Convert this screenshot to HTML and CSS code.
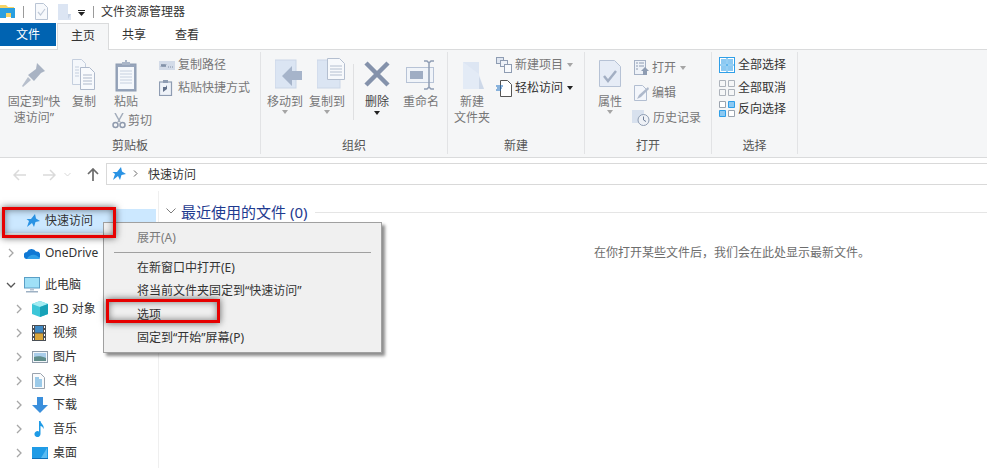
FILE: index.html
```html
<!DOCTYPE html>
<html lang="zh-CN">
<head>
<meta charset="utf-8">
<title>文件资源管理器</title>
<link rel="stylesheet" href="styles.css">
</head>
<body>
<div class="window">
  <header class="titlebar">
    <svg class="qa-folder" width="15" height="15" viewBox="0 0 15 15"><path d="M0 1h6l2 2h6v10H0z" fill="#f6d365"/><path d="M0 4h15v10H11V9H6v5H0z" fill="#2a9fe0"/></svg>
    <span class="qa-sep"></span>
    <svg class="qa-doc" width="13" height="17" viewBox="0 0 13 17"><path d="M.5.5h8l4 4v12H.5z" fill="#f7f9fc" stroke="#b9c4d4"/><path d="M3 9l2.500 3L10 6" fill="none" stroke="#c0cad8" stroke-width="1.200"/></svg>
    <svg class="qa-doc2" width="13" height="16" viewBox="0 0 13 16"><path d="M0 0h10v10h3v6H0z" fill="#dce5f3"/><path d="M10 10h3l-3 5z" fill="#c6d2e4"/></svg>
    <svg class="qa-drop" width="7" height="6" viewBox="0 0 7 6"><path d="M0 0h7v1H0zM0 2h7L3.500 6z" fill="#222"/></svg>
    <span class="qa-sep second"></span>
    <span class="title-text">文件资源管理器</span>
  </header>

  <nav class="tabs">
    <span class="tab file">文件</span>
    <span class="tab active">主页</span>
    <span class="tab share">共享</span>
    <span class="tab view">查看</span>
  </nav>

  <section class="ribbon">
    <div class="group g-clip">
      <div class="group-body">
        <div class="big w-pin">
          <svg class="bigicon" width="36" height="36" viewBox="0 0 36 36"><path d="M21 5l8 8-4 2-7 8-6-6 8-6z" fill="#a9b3c3"/><path d="M12 19l3 3-8 7-1-1z" fill="#b7bfcc"/></svg>
          <span class="lbl">固定到“快<br>速访问”</span>
        </div>
        <div class="big w-copy">
          <svg class="bigicon" width="26" height="36" viewBox="0 0 26 36"><path d="M1.500 1.500h9l4 4v21h-13z" fill="#f4f7fb" stroke="#c5cfde"/><path d="M9.500 9.500h9l5 5v17h-14z" fill="#f8fafd" stroke="#aeb9cb"/><path d="M12 17h9M12 20h9M12 23h9M12 26h9" stroke="#aeb9cb"/><path d="M4 9h4M4 12h4M4 15h4M4 18h4" stroke="#c5cfde"/></svg>
          <span class="lbl">复制</span>
        </div>
        <div class="paste-col">
          <div class="big w-paste">
            <svg class="bigicon" width="22" height="32" viewBox="0 0 22 32"><rect x="1" y="4" width="20" height="27" fill="#97a5bb" stroke="#8e9cb2"/><rect x="3" y="7" width="16" height="22" fill="#f5f8fc"/><path d="M5 11h12M5 14h12M5 17h12M5 20h12M5 23h12" stroke="#c6d0df"/><path d="M7 5V2h3V0h2v2h3v3z" fill="#aab6c8"/></svg>
            <span class="lbl">粘贴</span>
          </div>
          <div class="small cut">
            <svg width="14" height="16" viewBox="0 0 14 16"><path d="M3 0l5 9M11 0L6 9" stroke="#a2acbb" stroke-width="1.500" fill="none"/><circle cx="3.500" cy="12" r="2.500" fill="none" stroke="#8f9aad" stroke-width="1.500"/><circle cx="10.500" cy="12" r="2.500" fill="none" stroke="#8f9aad" stroke-width="1.500"/></svg>
            <span>剪切</span>
          </div>
        </div>
        <div class="small-col clip-small">
          <div class="small">
            <svg width="16" height="9" viewBox="0 0 16 9"><rect width="16" height="9" fill="#d3dbe8"/><path d="M2 6l1-3 1 3 1-3 1 3 1-3M9 6h1M11 6h1M13 6h1" stroke="#6f7f98" fill="none" stroke-width=".8"/></svg>
            <span>复制路径</span>
          </div>
          <div class="small shortcut">
            <svg width="14" height="16" viewBox="0 0 14 16"><rect x=".5" y="2" width="12" height="13.500" fill="#eef2f8" stroke="#8e9cb2" stroke-width="1.200"/><rect x="4" y="0" width="5" height="3" fill="#8e9cb2"/><path d="M4 12V7h4M8 5v4l-4 3z" fill="#62718a"/></svg>
            <span>粘贴快捷方式</span>
          </div>
        </div>
      </div>
      <div class="group-label">剪贴板</div>
    </div>

    <div class="group g-org">
      <div class="group-body">
        <div class="big w-move">
          <svg class="bigicon shift" width="28" height="36" viewBox="0 0 28 36"><rect x="0" y="2" width="21" height="28" fill="#dbe5f3" stroke="#cbd6e7"/><path d="M27 13v9H17v6L7 18l10-10v5z" fill="#a6b4ca"/></svg>
          <span class="lbl">移动到</span>
          <i class="caret"></i>
        </div>
        <div class="big w-copyto">
          <svg class="bigicon shift" width="28" height="36" viewBox="0 0 28 36"><rect x="0" y="2" width="23" height="28" fill="#dbe5f3" stroke="#cbd6e7"/><path d="M10.500 .5h12l5 5v16h-17z" fill="#f7f9fc" stroke="#b4bfd0"/><path d="M13 8h12M13 11h12M13 14h12M13 17h12" stroke="#b4bfd0"/></svg>
          <span class="lbl">复制到</span>
          <i class="caret"></i>
        </div>
        <span class="vsep"></span>
        <div class="big w-del">
          <svg class="bigicon" width="28" height="36" viewBox="0 0 28 36"><path d="M3 5l22 22M25 5L3 27" stroke="#8492ab" stroke-width="4.500"/></svg>
          <span class="lbl dark">删除</span>
          <i class="caret dark"></i>
        </div>
        <div class="big w-ren">
          <svg class="bigicon" width="30" height="36" viewBox="0 0 30 36"><rect x=".5" y="9.500" width="27" height="15" fill="#f0f4f9" stroke="#b7c3d6"/><rect x="4" y="13" width="13" height="8" fill="#9fadc3"/><path d="M18 3h3l2 2 2-2h3M18 31h3l2-2 2 2h3M23 5v24" stroke="#8f9db4" stroke-width="1.500" fill="none"/></svg>
          <span class="lbl">重命名</span>
        </div>
      </div>
      <div class="group-label">组织</div>
    </div>

    <div class="group g-new">
      <div class="group-body">
        <div class="big w-newf">
          <svg class="bigicon" width="24" height="36" viewBox="0 0 24 36"><path d="M3 4h16v27H3z" fill="#dde6f3"/><path d="M19 16l5 15H9L3 31V4z" fill="#e6edf7" opacity=".7"/><path d="M19 18l5 13h-5z" fill="#cdd8e8"/></svg>
          <span class="lbl">新建<br>文件夹</span>
        </div>
        <div class="small-col new-small">
          <div class="small">
            <svg width="16" height="16" viewBox="0 0 16 16"><rect x=".5" y=".5" width="7" height="6" fill="#dfe6f1" stroke="#8e9cb2"/><rect x="4.500" y="3.500" width="7" height="6" fill="#eef2f8" stroke="#8e9cb2"/><rect x="8.500" y="7.500" width="7" height="8" fill="#f7f9fc" stroke="#8e9cb2"/></svg>
            <span>新建项目</span><i class="caret inline"></i>
          </div>
          <div class="small dark">
            <svg width="16" height="17" viewBox="0 0 16 17"><path d="M4.500 .5h7l4 4v12h-11z" fill="#fff" stroke="#555"/><path d="M0 6h7M1 8h5M0 10h5" stroke="#1c6fc2" stroke-width="1.200"/></svg>
            <span>轻松访问</span><i class="caret inline dark"></i>
          </div>
        </div>
      </div>
      <div class="group-label">新建</div>
    </div>

    <div class="group g-open">
      <div class="group-body">
        <div class="big w-prop">
          <svg class="bigicon" width="22" height="36" viewBox="0 0 22 36"><path d="M.5 2.500h15l6 6v20H.5z" fill="#e6ecf6" stroke="#b6c2d5"/><path d="M5 18l4 5 8-10" fill="none" stroke="#a3afc3" stroke-width="2.500"/></svg>
          <span class="lbl">属性</span>
          <i class="caret"></i>
        </div>
        <div class="small-col open-small">
          <div class="small">
            <svg width="15" height="16" viewBox="0 0 15 16"><rect x=".5" y=".5" width="11" height="14" fill="#eef2f8" stroke="#a5b1c5"/><path d="M2 3h2M5 3h5M2 6h2M5 6h5M2 9h2" stroke="#8e9cb2"/><path d="M11 7l4 4h-2v4h-4v-4H7z" fill="#8e9cb2"/></svg>
            <span>打开</span><i class="caret inline"></i>
          </div>
          <div class="small">
            <svg width="15" height="16" viewBox="0 0 15 16"><path d="M.5.500h8l4 4v11H.5z" fill="#f3f6fb" stroke="#b2bed1"/><path d="M3 14l2-4 9-8 1 2-8 8z" fill="#aeb9cb"/></svg>
            <span>编辑</span>
          </div>
          <div class="small">
            <svg class="hist" width="18" height="16" viewBox="0 0 18 16"><rect x="0" y="0" width="12" height="13" fill="#d8e1ee"/><circle cx="11.500" cy="10" r="5.500" fill="#eef1f6" stroke="#8e9cb2"/><path d="M11.500 6.500V10l2.500 1.500" stroke="#6f7f98" fill="none"/></svg>
            <span>历史记录</span>
          </div>
        </div>
      </div>
      <div class="group-label">打开</div>
    </div>

    <div class="group g-sel">
      <div class="group-body">
        <div class="small-col sel-small">
          <div class="small dark">
            <svg width="16" height="16" viewBox="0 0 16 16"><rect x=".5" y=".5" width="15" height="15" fill="#fff" stroke="#2f9fe8"/><path d="M8 0v16M0 8h16" stroke="#2f9fe8"/><path d="M2 2h5v5H2zM9 2h5v5H9zM2 9h5v5H2zM9 9h5v5H9z" fill="#8cc9f2"/></svg>
            <span>全部选择</span>
          </div>
          <div class="small dark">
            <svg width="16" height="16" viewBox="0 0 16 16"><path d="M.5.500h6v6h-6zM9.500.500h6v6h-6zM.5 9.500h6v6h-6zM9.500 9.500h6v6h-6z" fill="none" stroke="#adb3bb"/></svg>
            <span>全部取消</span>
          </div>
          <div class="small dark">
            <svg width="16" height="16" viewBox="0 0 16 16"><path d="M.5.500h6v6h-6zM9.500 9.500h6v6h-6z" fill="#fff" stroke="#9aa3ae"/><path d="M9.500.500h6v6h-6zM.5 9.500h6v6h-6z" fill="#8cc9f2" stroke="#2f9fe8"/></svg>
            <span>反向选择</span>
          </div>
        </div>
      </div>
      <div class="group-label">选择</div>
    </div>
  </section>

  <div class="addressrow">
    <svg class="nav-back" width="13" height="12" viewBox="0 0 13 12"><path d="M6 1L1 6l5 5M1 6h12" stroke="#dadada" stroke-width="1.500" fill="none"/></svg>
    <svg class="nav-fwd" width="13" height="12" viewBox="0 0 13 12"><path d="M7 1l5 5-5 5M12 6H0" stroke="#dadada" stroke-width="1.500" fill="none"/></svg>
    <svg class="nav-chev" width="7" height="5" viewBox="0 0 7 5"><path d="M.5 1l3 3 3-3" stroke="#d8d8d8" fill="none"/></svg>
    <svg class="nav-up" width="12" height="13" viewBox="0 0 12 13"><path d="M1 6l5-5 5 5M6 1v12" stroke="#6b6b6b" stroke-width="1.700" fill="none"/></svg>
    <div class="addressbar">
      <svg width="14" height="14" viewBox="0 0 14 14"><path d="M9 0l1 4.500L14 7l-4.500 1L8 13 6 9 1 13l2-6L.5 5H5z" fill="#2a93e4"/></svg>
      <svg class="crumb" width="5" height="7" viewBox="0 0 5 7"><path d="M1 .5l3 3-3 3" stroke="#666" fill="none"/></svg>
      <span>快速访问</span>
    </div>
  </div>

  <div class="main">
    <aside class="sidebar">
      <div class="navrow selected">
        <svg class="pad-star" width="14" height="14" viewBox="0 0 14 14"><path d="M9 0l1 4.500L14 7l-4.500 1L8 13 6 9 1 13l2-6L.5 5H5z" fill="#2a93e4"/></svg>
        <span>快速访问</span>
      </div>
      <div class="navrow top-gap">
        <svg class="chev" width="6" height="10" viewBox="0 0 6 10"><path d="M1 1l4 4-4 4" stroke="#a6a6a6" stroke-width="1.300" fill="none"/></svg>
        <svg class="ico l1" width="16" height="11" viewBox="0 0 16 11"><path d="M3.500 11A3.500 3.500 0 0 1 3 4 5 5 0 0 1 12 3.500 3.700 3.700 0 0 1 13 11z" fill="#0f78d4"/><path d="M3 11c1-3 5-5 8-4 2 .5 4 2 5 4z" fill="#2f9fe8"/></svg>
        <span>OneDrive</span>
      </div>
      <div class="navrow top-gap">
        <svg class="chev" width="10" height="6" viewBox="0 0 10 6"><path d="M1 1l4 4 4-4" stroke="#555" stroke-width="1.300" fill="none"/></svg>
        <svg class="ico l1pc" width="16" height="16" viewBox="0 0 16 16"><rect x=".5" y=".5" width="15" height="10.500" fill="#9fe0f7" stroke="#5a9fc6"/><rect x="6" y="11.500" width="4" height="2" fill="#b6c5d5"/><rect x="2" y="14" width="12" height="1.500" fill="#9eb1c4"/></svg>
        <span>此电脑</span>
      </div>
      <div class="navrow child">
        <svg class="chev" width="6" height="10" viewBox="0 0 6 10"><path d="M1 1l4 4-4 4" stroke="#a6a6a6" stroke-width="1.300" fill="none"/></svg>
        <svg class="ico" width="16" height="16" viewBox="0 0 16 16"><path d="M8 0l8 3v10l-8 3-8-3V3z" fill="#3cc6d8"/><path d="M8 0l8 3-8 3-8-3z" fill="#a4ecf2"/><path d="M8 6l8-3v10l-8 3z" fill="#17a2b8"/></svg>
        <span>3D 对象</span>
      </div>
      <div class="navrow child">
        <svg class="chev" width="6" height="10" viewBox="0 0 6 10"><path d="M1 1l4 4-4 4" stroke="#a6a6a6" stroke-width="1.300" fill="none"/></svg>
        <svg class="ico" width="14" height="16" viewBox="0 0 14 16"><rect width="14" height="16" fill="#4a4f55"/><rect x="3" y="1" width="8" height="6.500" fill="#3f89c4"/><rect x="3" y="8.500" width="8" height="6.500" fill="#d9a53a"/><path d="M1 1h1v2H1zM1 5h1v2H1zM1 9h1v2H1zM1 13h1v2H1zM12 1h1v2h-1zM12 5h1v2h-1zM12 9h1v2h-1zM12 13h1v2h-1z" fill="#fff"/></svg>
        <span>视频</span>
      </div>
      <div class="navrow child">
        <svg class="chev" width="6" height="10" viewBox="0 0 6 10"><path d="M1 1l4 4-4 4" stroke="#a6a6a6" stroke-width="1.300" fill="none"/></svg>
        <svg class="ico" width="16" height="12" viewBox="0 0 16 12"><rect x=".5" y=".5" width="15" height="11" fill="#f2f6fa" stroke="#8d9aa8"/><rect x="2" y="2" width="12" height="5" fill="#a9cdea"/><path d="M2 6c3-1 8-1 12 1v3H2z" fill="#5f8d8a"/></svg>
        <span>图片</span>
      </div>
      <div class="navrow child">
        <svg class="chev" width="6" height="10" viewBox="0 0 6 10"><path d="M1 1l4 4-4 4" stroke="#a6a6a6" stroke-width="1.300" fill="none"/></svg>
        <svg class="ico" width="13" height="16" viewBox="0 0 13 16"><path d="M.5.500h8l4 4v11H.5z" fill="#fafbfc" stroke="#9aa3ae"/><path d="M3 5h4M3 7h7M3 9h7M3 11h7M3 13h7" stroke="#3f9ad6"/></svg>
        <span>文档</span>
      </div>
      <div class="navrow child">
        <svg class="chev" width="6" height="10" viewBox="0 0 6 10"><path d="M1 1l4 4-4 4" stroke="#a6a6a6" stroke-width="1.300" fill="none"/></svg>
        <svg class="ico" width="16" height="16" viewBox="0 0 16 16"><path d="M5 0h6v8h5l-8 8-8-8h5z" fill="#3a8fdc"/></svg>
        <span>下载</span>
      </div>
      <div class="navrow child">
        <svg class="chev" width="6" height="10" viewBox="0 0 6 10"><path d="M1 1l4 4-4 4" stroke="#a6a6a6" stroke-width="1.300" fill="none"/></svg>
        <svg class="ico" width="16" height="16" viewBox="0 0 16 16"><path d="M7 0h1.500c.5 3 4 4 3 8-.5-2-2-3-3-3v8a3 3 0 1 1-1.500-2.500z" fill="#1f9be6"/></svg>
        <span>音乐</span>
      </div>
      <div class="navrow child">
        <svg class="chev" width="6" height="10" viewBox="0 0 6 10"><path d="M1 1l4 4-4 4" stroke="#a6a6a6" stroke-width="1.300" fill="none"/></svg>
        <svg class="ico" width="16" height="12" viewBox="0 0 16 12"><rect width="16" height="11" fill="#1f9be6"/><path d="M9 11l6-10v10z" fill="#5cbcf2"/><rect y="11" width="16" height="1" fill="#0e6fb8"/></svg>
        <span>桌面</span>
      </div>
    </aside>
    <main class="content">
      <div class="section-head">
        <svg width="10" height="6" viewBox="0 0 10 6"><path d="M.5.500L5 5 9.500.500" stroke="#7c7c7c" fill="none"/></svg>
        <span>最近使用的文件 (0)</span>
        <i class="rule"></i>
      </div>
      <p class="empty">在你打开某些文件后，我们会在此处显示最新文件。</p>
    </main>
  </div>

  <div class="menu">
    <div class="mitem disabled">展开(A)</div>
    <div class="msep"></div>
    <div class="mitem">在新窗口中打开(E)</div>
    <div class="mitem">将当前文件夹固定到“快速访问”</div>
    <div class="mitem">选项</div>
    <div class="mitem">固定到“开始”屏幕(P)</div>
  </div>
  <div class="callout c1"></div>
  <div class="callout c2"></div>
</div>
</body>
</html>
```
FILE: styles.css
```css
* { box-sizing: border-box; }
html, body { margin: 0; padding: 0; background: #fff; }
body { font-family: "Noto Sans", "Noto Sans CJK SC", sans-serif; font-size: 12px; color: #333; }
.window { position: relative; width: 987px; height: 468px; overflow: hidden; }
svg { display: block; flex: none; }

.titlebar { height: 23px; display: flex; align-items: center; }
.qa-sep { width: 1px; height: 12px; background: #9a9a9a; margin-left: 8px; }
.qa-doc { margin-left: 11px; }
.qa-doc2 { margin-left: 10px; }
.qa-drop { margin-left: 7px; margin-top: 3px; }
.qa-sep.second { margin-left: 8px; }
.title-text { margin-left: 7px; color: #333; line-height: 16px; }

.tabs { height: 27px; display: flex; align-items: flex-start; }
.tab { line-height: 23px; text-align: center; color: #333; }
.tab.file { width: 56px; height: 23px; background: #0063b1; color: #fff; }
.tab.active { width: 52px; height: 27px; margin-left: 1px; background: #f5f6f7; border: 1px solid #dadbdc; border-bottom: 0; }
.tab.share { width: 50px; }
.tab.view { width: 56px; }

.ribbon { height: 109px; background: #f5f6f7; border-top: 1px solid #dadbdc; border-bottom: 1px solid #dadbdc; display: flex; padding-top: 2px; margin-top: -1px; }
.group { display: flex; flex-direction: column; height: 102px; border-right: 1px solid #e2e3e5; flex: none; }
.g-clip { width: 261px; }
.g-org { width: 187px; }
.g-new { width: 137px; }
.g-open { width: 127px; }
.g-sel { width: 86px; }
.group-body { height: 86px; display: flex; align-items: flex-start; padding-top: 5px; }
.group-label { height: 16px; line-height: 16px; text-align: center; color: #555; }

.big { display: flex; flex-direction: column; align-items: center; flex: none; padding-top: 1px; }
.bigicon { height: 36px; }
.bigicon.shift { position: relative; left: 4px; }
.lbl { line-height: 16px; text-align: center; color: #777; white-space: nowrap; }
.lbl.dark { color: #444; }
.caret { display: block; width: 0; height: 0; border: 3px solid transparent; border-top: 4px solid #a5a5a5; border-bottom: 0; margin-top: 0; }
.caret.dark { border-top-color: #222; margin-top: 1px; }
.caret.inline { margin: 0 0 0 1px; }

.w-pin { width: 56px; margin-left: 6px; }
.w-copy { width: 32px; margin-left: 6px; }
.paste-col { display: flex; flex-direction: column; width: 37px; margin-left: 13px; align-items: flex-start; }
.w-paste { width: 26px; }
.small { display: flex; align-items: center; gap: 3px; color: #777; height: 16px; line-height: 16px; white-space: nowrap; }
.small.dark { color: #333; }
.cut { margin-top: 3px; gap: 2px; margin-left: -1px; }
.small-col { display: flex; flex-direction: column; flex: none; }
.clip-small { margin-left: 9px; gap: 7px; }
.shortcut { gap: 5px; }
.g-org .group-body { padding-left: 5px; }
.w-move { width: 38px; }
.w-copyto { width: 38px; margin-left: 4px; }
.vsep { width: 1px; height: 56px; background: #dfe0e2; margin: 7px 0 0 7px; flex: none; }
.w-del { width: 30px; margin-left: 8px; }
.w-ren { width: 38px; margin-left: 10px; }
.w-newf { width: 38px; margin-left: 5px; }
.new-small { margin-left: 5px; gap: 7px; }
.w-prop { width: 30px; margin-left: 10px; }
.open-small { margin-left: 9px; gap: 9px; padding-top: 3px; }
.open-small .hist { margin-left: -2px; }
.sel-small { margin-left: 7px; gap: 7px; }
.sel-small .small:last-child { margin-top: -2px; }

.addressrow { height: 33px; display: flex; align-items: center; }
.nav-back { margin-left: 13px; }
.nav-fwd { margin-left: 17px; }
.nav-chev { margin-left: 8px; }
.nav-up { margin-left: 16px; }
.addressbar { margin-left: 7px; flex: 1; height: 22px; border: 1px solid #d9d9d9; border-right: 0; display: flex; align-items: center; padding-left: 5px; margin-top: -2px; }
.crumb { margin-left: 7px; margin-right: 10px; }

.main { display: flex; height: 277px; }
.sidebar { width: 159px; border-right: 1px solid #efefef; padding-top: 18px; flex: none; }
.navrow { height: 24px; display: flex; align-items: center; color: #333; position: relative; }
.navrow span { position: absolute; left: 45px; line-height: 16px; white-space: nowrap; }
.navrow.child span { left: 53px; }
.navrow.selected { background: #cce8ff; margin: 0 2px; }
.navrow.selected span { left: 43px; }
.pad-star { margin-left: 24px; }
.top-gap { margin-top: 8px; }
.chev { margin-left: 8px; }
.navrow:nth-child(3) .chev { margin-left: 6px; }
.navrow.child .chev { margin-left: 16px; }
.ico { position: absolute; left: 32px; }
.ico.l1, .ico.l1pc { left: 24px; }

.content { flex: 1; padding-left: 7px; padding-top: 10px; }
.section-head { display: flex; align-items: center; height: 20px; color: #1e3a8f; font-size: 15px; }
.section-head svg { margin-right: 5px; }
.section-head .rule { flex: 1; height: 1px; background: #e5e5e5; margin-left: 8px; margin-top: 2px; }
.empty { margin: 24px 0 0; color: #6d6d6d; line-height: 16px; padding-left: 428px; }

.menu { position: absolute; left: 103px; top: 222px; width: 279px; height: 131px; background: #f0f0f0; border: 1px solid #a0a0a0; box-shadow: 3px 3px 3px rgba(0,0,0,.45); padding: 3px 0 0; }
.mitem { height: 23.500px; line-height: 23.500px; padding-left: 33px; color: #333; white-space: nowrap; }
.mitem.disabled { color: #7a7a7a; }
.msep { height: 1px; background: #a0a0a0; margin: 2px 10px 3px; }

.callout { position: absolute; border: 3px solid #e60000; box-shadow: 0 0 7px rgba(0,0,0,.6), inset 0 0 7px rgba(0,0,0,.5); }
.c1 { left: 2px; top: 207px; width: 114px; height: 31px; }
.c2 { left: 106px; top: 299px; width: 114px; height: 24px; }
```
